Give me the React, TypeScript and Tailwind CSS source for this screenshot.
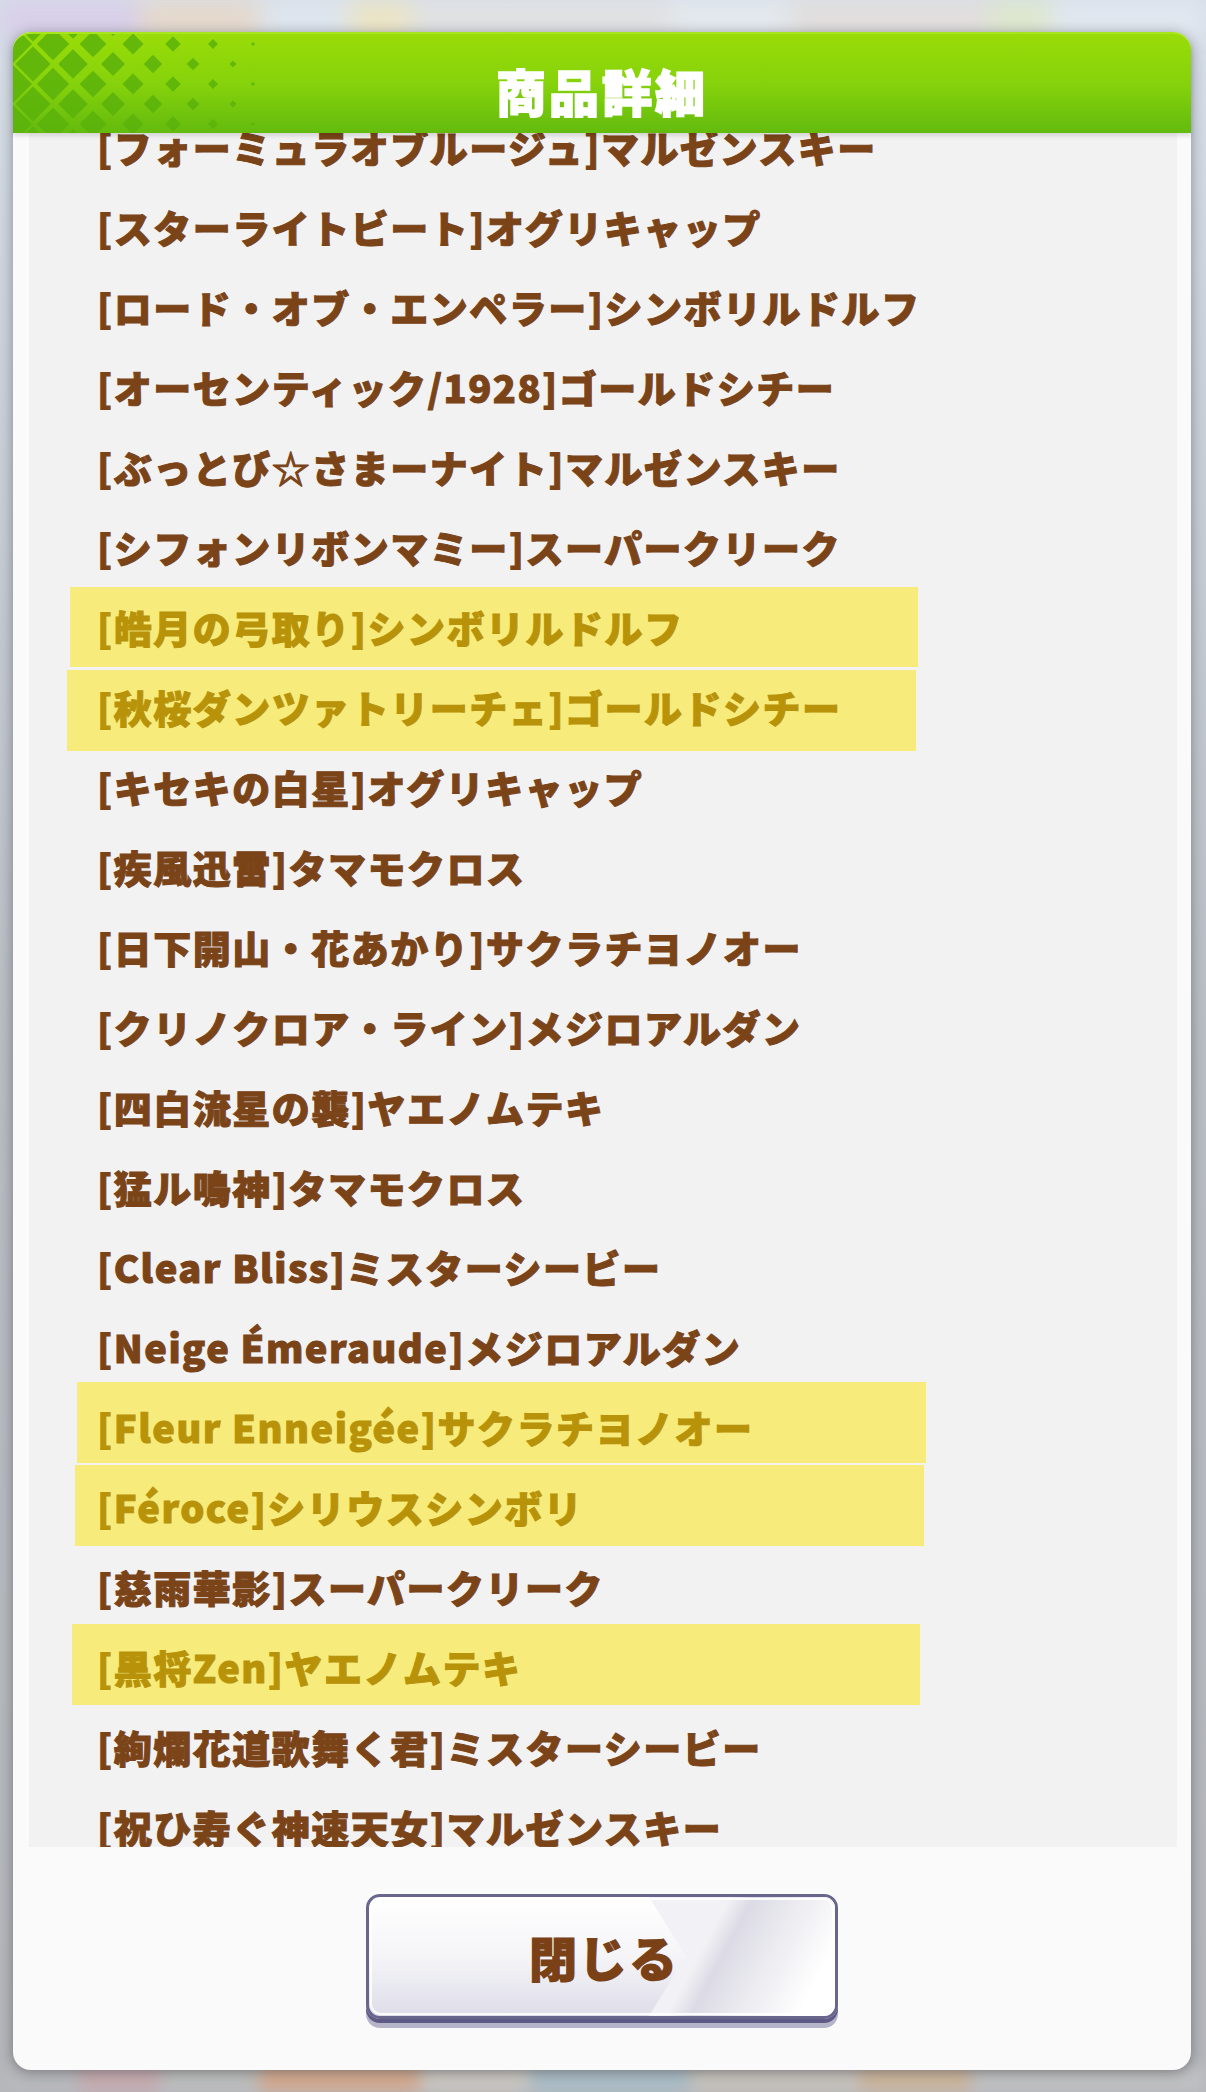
import React from 'react';

interface Item {
  label: string;
  // highlight box position inside the row (the game draws these slightly off-grid)
  hl?: string;
}

const ITEMS: Item[] = [
  { label: '[フォーミュラオブルージュ]マルゼンスキー' },
  { label: '[スターライトビート]オグリキャップ' },
  { label: '[ロード・オブ・エンペラー]シンボリルドルフ' },
  { label: '[オーセンティック/1928]ゴールドシチー' },
  { label: '[ぶっとび☆さまーナイト]マルゼンスキー' },
  { label: '[シフォンリボンマミー]スーパークリーク' },
  { label: '[皓月の弓取り]シンボリルドルフ', hl: 'top-[0px] left-[41px] w-[848px] h-[80px]' },
  { label: '[秋桜ダンツァトリーチェ]ゴールドシチー', hl: 'top-[3px] left-[38px] w-[849px] h-[81px]' },
  { label: '[キセキの白星]オグリキャップ' },
  { label: '[疾風迅雷]タマモクロス' },
  { label: '[日下開山・花あかり]サクラチヨノオー' },
  { label: '[クリノクロア・ライン]メジロアルダン' },
  { label: '[四白流星の襲]ヤエノムテキ' },
  { label: '[猛ル鳴神]タマモクロス' },
  { label: '[Clear Bliss]ミスターシービー' },
  { label: '[Neige Émeraude]メジロアルダン' },
  { label: '[Fleur Enneigée]サクラチヨノオー', hl: 'top-[-5px] left-[48px] w-[849px] h-[81px]' },
  { label: '[Féroce]シリウスシンボリ', hl: 'top-[-2px] left-[46px] w-[849px] h-[81px]' },
  { label: '[慈雨華影]スーパークリーク' },
  { label: '[黒将Zen]ヤエノムテキ', hl: 'top-[-3px] left-[43px] w-[848px] h-[81px]' },
  { label: '[絢爛花道歌舞く君]ミスターシービー' },
  { label: '[祝ひ寿ぐ神速天女]マルゼンスキー' },
];

const FONT = { fontFamily: '"Noto Sans CJK JP", "Noto Sans", sans-serif' };

// diamond halftone in the header's left corner
const Lattice = () => {
  const diamonds: { x: number; y: number; r: number }[] = [];
  for (let i = 0; i < 14; i++) {
    for (let j = -1; j < 7; j++) {
      if ((i + j) % 2 !== 0) continue;
      const x = i * 20;
      const y = j * 20 + 10;
      const r = 19 * (1 - x / 270);
      if (r > 1.5) diamonds.push({ x, y, r });
    }
  }
  return (
    <svg className="absolute left-0 top-0" width="280" height="101" viewBox="0 0 280 101">
      {diamonds.map((d, k) => (
        <polygon
          key={k}
          points={`${d.x},${d.y - d.r} ${d.x + d.r},${d.y} ${d.x},${d.y + d.r} ${d.x - d.r},${d.y}`}
          fill="#5bb20a"
          opacity={0.85}
        />
      ))}
    </svg>
  );
};

const App = () => {
  return (
    <div className="relative w-[1206px] h-[2092px] overflow-hidden bg-gradient-to-b from-[#d6dee8] via-[#b9bdc4] to-[#b4b6bb]" style={FONT}>
      {/* blurred game scene behind the dialog */}
      <div className="absolute inset-x-0 top-0 h-[40px] flex blur-md opacity-90">
        <div className="w-[140px] bg-[#d9cdea]" />
        <div className="w-[120px] bg-[#e8d8c8]" />
        <div className="w-[90px] bg-[#dfe6ef]" />
        <div className="w-[60px] bg-[#efe6c0]" />
        <div className="w-[260px] bg-[#e2e2e2]" />
        <div className="w-[120px] bg-[#e6ebef]" />
        <div className="w-[200px] bg-[#e3dfdc]" />
        <div className="w-[60px] bg-[#dfe9c9]" />
        <div className="flex-1 bg-[#e3e9f1]" />
      </div>
      <div className="absolute inset-x-0 bottom-0 h-[26px] flex blur-sm">
        <div className="w-[80px] bg-[#b8b8bc]" />
        <div className="w-[80px] bg-[#c7aab0]" />
        <div className="w-[100px] bg-[#bdbdbd]" />
        <div className="w-[160px] bg-[#d4a88d]" />
        <div className="w-[110px] bg-[#c9c6c1]" />
        <div className="w-[160px] bg-[#a9bcc6]" />
        <div className="w-[170px] bg-[#c6c2bc]" />
        <div className="w-[110px] bg-[#cdb49a]" />
        <div className="flex-1 bg-[#c0c0c2]" />
      </div>

      <div className="relative h-full pt-[32px] pl-[13px] pr-[15px] pb-[22px]">
        <div className="flex h-full flex-col rounded-[18px] bg-[#fafafa] shadow-[0_2px_14px_rgba(0,0,0,0.35)]">
          {/* header */}
          <div className="relative z-10 h-[101px] shrink-0 overflow-hidden rounded-t-[18px] border-t-2 border-[#a9e51c] bg-gradient-to-b from-[#99dc08] via-[#86d20b] to-[#63bb0e] shadow-[0_3px_4px_rgba(0,0,0,0.12)]">
            <Lattice />
            <div className="relative flex h-full items-center justify-center pt-[12px]">
              <h1 className="text-[50px] font-black leading-none tracking-[3px] text-white [-webkit-text-stroke:1.6px_#ffffff]">商品詳細</h1>
            </div>
          </div>

          {/* scrolled list */}
          <div className="ml-[16px] mr-[14px] h-[1714px] shrink-0 overflow-hidden bg-[#f2f2f2]">
            <div className="-mt-[26px]">
              {ITEMS.map((item) => (
                <div key={item.label} className="relative flex h-[80px] items-center pl-[68px]">
                  {item.hl && <div className={`absolute bg-[#f7ec7b] ${item.hl}`} />}
                  <span
                    className={`relative whitespace-nowrap text-[38px] font-black leading-none tracking-[1.5px] [-webkit-text-stroke:1px_currentColor] ${
                      item.hl ? 'text-[#b8930a]' : 'text-[#7a4418]'
                    }`}
                  >
                    {item.label}
                  </span>
                </div>
              ))}
            </div>
          </div>

          {/* footer */}
          <div className="flex flex-1 justify-center pt-[47px]">
            <button className="relative h-[125px] w-[472px] overflow-hidden rounded-[14px] border-[3px] border-[#68668c] bg-gradient-to-b from-white via-[#f5f5f8] to-[#dedde9] shadow-[0_4px_0_#5d5a86,0_9px_0_#b5b4c8]">
              <div className="absolute inset-y-0 right-0 w-[186px] bg-[linear-gradient(118deg,#f2f2f6_0%,#f2f2f6_32%,#dcdbe5_42%,#ececf1_62%,#ffffff_85%)] [clip-path:polygon(0_0,100%_0,100%_100%,0_100%,20%_50%)]" />
              <div className="absolute inset-[1px] rounded-[11px] border-2 border-white/90" />
              <span className="relative pl-[4px] text-[48px] font-black leading-none tracking-[2px] text-[#7a4016] [-webkit-text-stroke:1.2px_#7a4016]">閉じる</span>
            </button>
          </div>
        </div>
      </div>
    </div>
  );
};

export default App;
